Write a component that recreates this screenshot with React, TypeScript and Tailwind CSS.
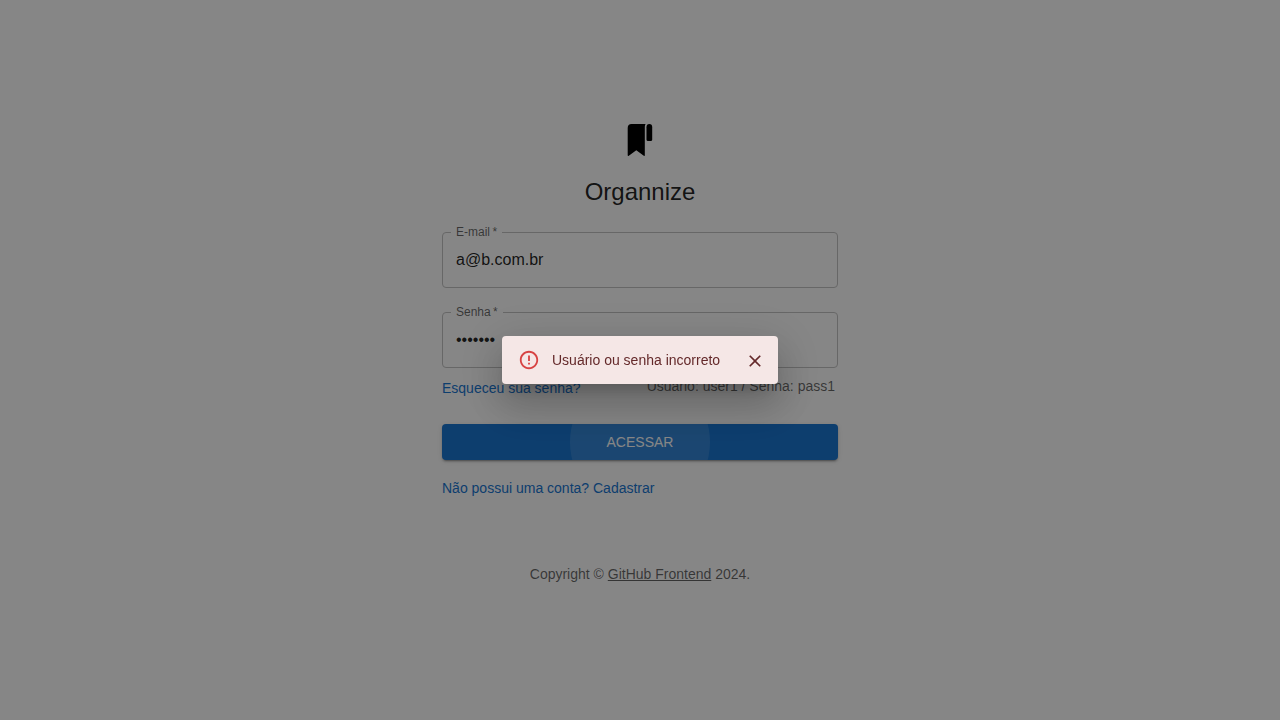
import React, { useState } from "react";

type FieldProps = {
  id: string;
  label: string;
  type: string;
  value: string;
  onChange: (value: string) => void;
};

function Field({ id, label, type, value, onChange }: FieldProps) {
  return (
    <fieldset className="w-full rounded border border-[#c4c4c4] pb-[5px]">
      <legend className="ml-2 h-3 px-[5px] text-xs leading-3 text-black/60">
        <label htmlFor={id}>{label}&thinsp;*</label>
      </legend>
      <input
        id={id}
        type={type}
        required
        value={value}
        onChange={(e) => onChange(e.target.value)}
        className="block h-11 w-full bg-transparent px-[13px] text-base text-black/87 outline-none"
      />
    </fieldset>
  );
}

function Logo() {
  return (
    <svg viewBox="0 0 40 40" className="size-10" fill="currentColor" aria-hidden="true">
      <path d="M11.6 4H25.6C25.1 4.8 24.8 5.7 24.8 6.8V35.2Q24.8 36.4 23.8 35.8L16.3 30.3L8.8 35.8Q7.7 36.4 7.7 35.2V8Q7.7 4 11.6 4Z" />
      <path d="M29.3 4Q32.2 4 32.2 7.2V19.8Q32.2 20.9 31.1 20.9H27.6Q26.5 20.9 26.5 19.8V7.2Q26.5 4 29.3 4Z" />
    </svg>
  );
}

function ErrorIcon() {
  return (
    <svg viewBox="0 0 24 24" className="size-[22px] text-[#d74343]" fill="currentColor" aria-hidden="true">
      <path d="M11 15h2v2h-2zm0-8h2v6h-2zm.99-5C6.47 2 2 6.48 2 12s4.47 10 9.99 10C17.52 22 22 17.52 22 12S17.52 2 11.99 2zM12 20c-4.42 0-8-3.58-8-8s3.58-8 8-8 8 3.58 8 8-3.58 8-8 8z" />
    </svg>
  );
}

function CloseIcon() {
  return (
    <svg viewBox="0 0 24 24" className="size-5" fill="currentColor" aria-hidden="true">
      <path d="M19 6.41L17.59 5 12 10.59 6.41 5 5 6.41 10.59 12 5 17.59 6.41 19 12 13.41 17.59 19 19 17.59 13.41 12z" />
    </svg>
  );
}

export default function App() {
  const [email, setEmail] = useState("a@b.com.br");
  const [password, setPassword] = useState("1234567");
  const [open, setOpen] = useState(true);

  return (
    <div className="min-h-screen bg-white font-['Liberation_Sans',Arial,sans-serif] text-sm leading-5 text-black/87">
      <main className="mx-auto flex w-full max-w-[444px] flex-col items-center px-6 pt-30">
        <div className="text-black">
          <Logo />
        </div>
        <h1 className="mt-4 text-2xl leading-8">Organnize</h1>
        <form className="mt-[18px] w-full" onSubmit={(e) => e.preventDefault()}>
          <div className="flex flex-col gap-[18px]">
            <Field id="email" label="E-mail" type="email" value={email} onChange={setEmail} />
            <Field id="password" label="Senha" type="password" value={password} onChange={setPassword} />
          </div>
          <div className="mt-2 flex items-start justify-between">
            <a href="#recover" className="mt-0.5 text-[#1976d2]">
              Esqueceu sua senha?
            </a>
            <p className="pr-[3px] text-black/60">Usuário: user1 / Senha: pass1</p>
          </div>
          <button
            type="submit"
            className="relative mt-[26px] block h-9 w-full overflow-hidden rounded bg-[#1976d2] text-sm text-white uppercase shadow-[0_3px_1px_-2px_rgba(0,0,0,0.2),0_2px_2px_0_rgba(0,0,0,0.14),0_1px_5px_0_rgba(0,0,0,0.12)]"
          >
            Acessar
            <span className="absolute top-1/2 left-1/2 size-[140px] -translate-x-1/2 -translate-y-1/2 rounded-full bg-white/12" />
          </button>
        </form>
        <a href="#signup" className="mt-[18px] self-start text-[#1976d2]">
          Não possui uma conta? Cadastrar
        </a>
        <footer className="mt-[66px] pb-6 text-black/60">
          Copyright ©{" "}
          <a href="#github" className="underline">
            GitHub Frontend
          </a>{" "}
          2024.
        </footer>
      </main>

      {open && (
        <div className="fixed inset-0 flex items-center justify-center bg-black/[0.475]">
          <div
            role="alertdialog"
            aria-modal="true"
            aria-labelledby="alert-text"
            className="flex h-12 w-[276px] items-center rounded bg-[#f5e7e6] pr-[13px] pl-4 text-[#64292a] shadow-[0_11px_15px_-7px_rgba(0,0,0,0.2),0_24px_38px_3px_rgba(0,0,0,0.14),0_9px_46px_8px_rgba(0,0,0,0.12)]"
          >
            <ErrorIcon />
            <p id="alert-text" className="ml-3 flex-1">
              Usuário ou senha incorreto
            </p>
            <button type="button" aria-label="Fechar" className="mt-0.5" onClick={() => setOpen(false)}>
              <CloseIcon />
            </button>
          </div>
        </div>
      )}
    </div>
  );
}
